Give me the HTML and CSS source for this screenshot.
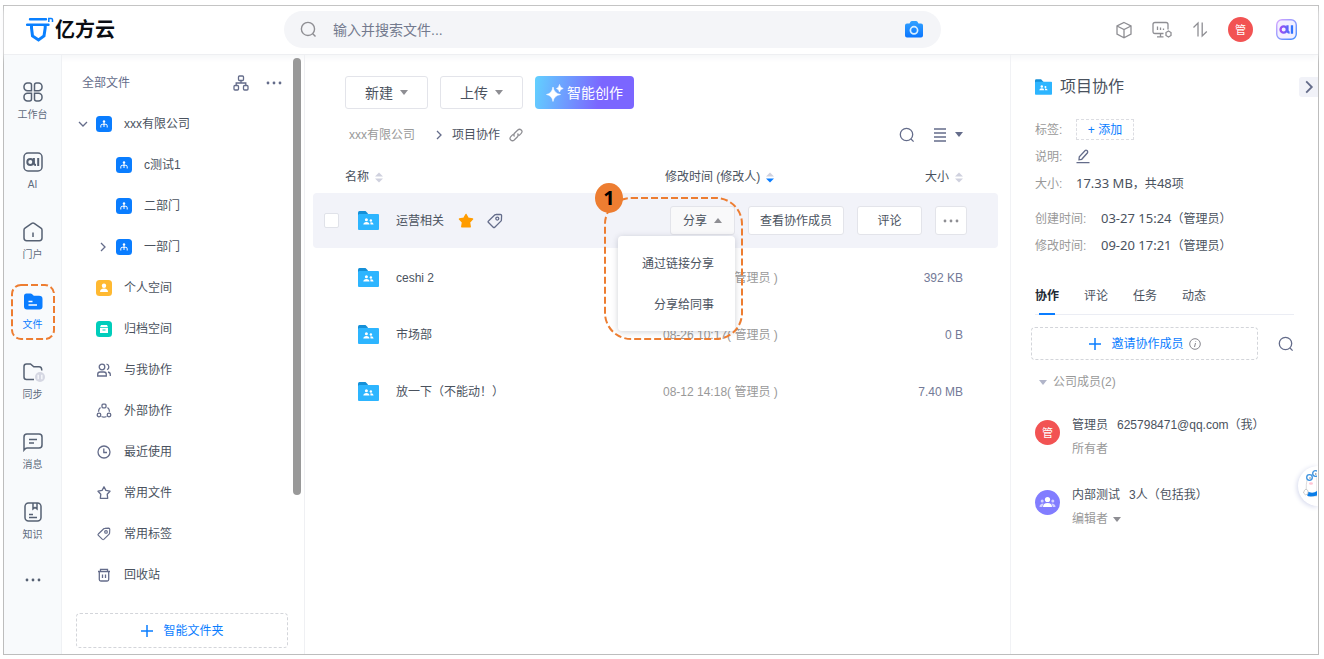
FILE: index.html
```html
<!DOCTYPE html>
<html lang="zh-CN">
<head>
<meta charset="utf-8">
<meta name="viewport" content="width=device-width, initial-scale=1">
<title>亿方云</title>
<link rel="stylesheet" href="styles.css">
</head>
<body>
<svg class="sprite" aria-hidden="true">
  <symbol id="i-search" viewBox="0 0 16 16"><circle cx="7.5" cy="7.5" r="6.2"/><path d="M12 12l2.6 2.6"/></symbol>
  <symbol id="i-dots" viewBox="0 0 16 16"><g fill="currentColor" stroke="none"><circle cx="2" cy="8" r="1.4"/><circle cx="8" cy="8" r="1.4"/><circle cx="14" cy="8" r="1.4"/></g></symbol>
  <symbol id="i-dept" viewBox="0 0 16 16"><rect width="16" height="16" rx="3.5" fill="#0a7dff" stroke="none"/><g stroke="#fff" stroke-width="1" fill="none"><path d="M8 5v6M4.8 11.500V9.800Q4.8 8.300 6.2 8.300H9.800Q11.200 8.300 11.200 9.800V11.500"/></g><circle cx="8" cy="5.400" r="1.200" fill="#fff" stroke="none"/></symbol>
  <symbol id="i-folder" viewBox="0 0 21 19"><g stroke="none"><path d="M0 1.500Q0 0 1.500 0H7.5L10 2.600V8H0Z" fill="#1590d8"/><path d="M0 4L1 3H20Q21 3 21 4V18Q21 19 20 19H1Q0 19 0 18Z" fill="#2db5ff"/><g fill="#fff"><circle cx="8.4" cy="8.800" r="1.500"/><path d="M5.3 13.500Q5.500 11 8.400 11T11.500 13.500Z"/><circle cx="12.900" cy="9.500" r="1.200"/><path d="M12.300 11.400Q15.300 11 15.600 13.500H12.500Z"/></g></g></symbol>
  <symbol id="i-plus" viewBox="0 0 14 14"><path d="M7 1v12M1 7h12"/></symbol>
  <symbol id="i-tag" viewBox="0 0 16 16"><path d="M1.3 9.3Q.8 8.6 1.5 8L7.7 2Q8.2 1.5 9 1.5L13.3 1.3Q14.6 1.3 14.6 2.6L14.4 6.9Q14.4 7.6 13.9 8.1L7.8 14.2Q7 14.9 6.2 14.2Z"/><circle cx="10.3" cy="5.6" r="1.5"/></symbol>
  <symbol id="i-right" viewBox="0 0 10 10"><path d="M3 1l4 4-4 4"/></symbol>
  <symbol id="i-sort" viewBox="0 0 8 11"><path class="up" d="M4 0.5L8 4.5H0Z"/><path class="down" d="M4 10.5L8 6.5H0Z"/></symbol>
  <symbol id="i-ai" viewBox="0 0 20 20"><circle cx="7.300" cy="10" r="3"/><path d="M10.900 6V10.500Q10.900 13 13 13M15.200 6V14"/></symbol>
</svg>

<div class="app">
  <header class="topbar">
    <a class="brand" href="#" aria-label="亿方云">
      <svg class="brand-mark" width="28" height="26" viewBox="0 0 28 26"><g fill="none" stroke="#0a80ff"><path d="M4 2.300H20M1 7.800H22.500" stroke-width="2.400" stroke-linecap="round"/><path d="M5.500 8.500V11L6.500 19L12.500 23L18 19L19.200 11V8.500" stroke-width="3"/></g><path d="M22.800 5V1.500H25.200Q26.500 1.500 26.500 2.800V5" fill="none" stroke="#0a80ff" stroke-width="1.500"/></svg>
      <span class="brand-name">亿方云</span>
    </a>
    <label class="search">
      <svg class="ico grey" width="17" height="17"><use href="#i-search"/></svg>
      <input class="search-input" type="text" aria-label="搜索" placeholder="输入并搜索文件...">
      <svg width="18" height="17" viewBox="0 0 18 17"><defs><linearGradient id="cam" x2="0" y2="1"><stop stop-color="#33a2ff"/><stop offset="1" stop-color="#0a76ff"/></linearGradient></defs><path d="M2 2.6H4.5L5.5 .8Q6 0 7 0H11Q12 0 12.5.8L13.5 2.6H16Q18 2.6 18 4.6V14.5Q18 16.5 16 16.5H2Q0 16.5 0 14.5V4.6Q0 2.6 2 2.6Z" fill="url(#cam)"/><circle cx="9" cy="9.3" r="3.6" fill="none" stroke="#d9efff" stroke-width="1.7"/></svg>
    </label>
    <nav class="tools">
      <button class="bare" aria-label="应用"><svg class="ico grey" width="16" height="18" viewBox="0 0 16 18"><path d="M8 1.5L15 5V13L8 16.7L1 13V5ZM1 5L8 8.6L15 5M8 8.6V16.7"/></svg></button>
      <button class="bare" aria-label="设备"><svg class="ico grey" width="20" height="18" viewBox="0 0 20 18"><path d="M11.5 12.5H3Q1 12.5 1 10.5V3.500Q1 1.500 3 1.500H14Q16 1.500 16 3.500V8.500M5.500 5.500V9M8.500 6.500V9M11.500 7.500V9M8.500 12.500V15.500M5 15.800H11.500"/><path d="M16.500 10L19 11.500V14.500L16.500 16L14 14.500V11.500Z"/></svg></button>
      <button class="bare" aria-label="传输"><svg class="ico grey" width="16" height="18" viewBox="0 0 16 18"><path d="M1.500 6.500L6 2V15.500M10.200 1.500V15L14.800 10.500"/></svg></button>
      <span class="avatar red">管</span>
      <button class="bare ai-btn" aria-label="AI"><svg width="21" height="21" viewBox="0 0 20 20"><defs><linearGradient id="aig" x2="1" y2="1"><stop stop-color="#d9a6ff"/><stop offset="1" stop-color="#3d8bff"/></linearGradient><linearGradient id="ait" gradientUnits="userSpaceOnUse" x1="4" y1="0" x2="16" y2="0"><stop stop-color="#a24df2"/><stop offset="1" stop-color="#2b76ff"/></linearGradient></defs><rect x=".7" y=".7" width="18.600" height="18.600" rx="5" fill="#f3f0ff" stroke="url(#aig)" stroke-width="1.300"/><g fill="none" stroke="url(#ait)" stroke-width="2.200"><use href="#i-ai"/></g></svg></button>
    </nav>
  </header>

  <div class="body">
    <nav class="rail">
      <a class="rail-item" href="#"><svg class="ico" width="20" height="20" viewBox="0 0 20 20"><path d="M8.500 8.700H4.500A3.500 3.500 0 0 1 1 5.200V4.500A3.500 3.500 0 0 1 4.500 1H6.500Q8.500 1 8.500 3ZM11.500 8.700H15.500A3.500 3.500 0 0 0 19 5.200V4.500A3.500 3.500 0 0 0 15.500 1H13.500Q11.500 1 11.500 3ZM8.500 11.300H4.500A3.500 3.500 0 0 0 1 14.800V15.500A3.500 3.500 0 0 0 4.500 19H6.500Q8.500 19 8.500 17ZM11.500 11.300H15.500A3.500 3.500 0 0 1 19 14.800V15.500A3.500 3.500 0 0 1 15.500 19H13.500Q11.500 19 11.500 17Z"/></svg><span>工作台</span></a>
      <a class="rail-item" href="#"><svg class="ico" width="20" height="20" viewBox="0 0 20 20"><rect x="1" y="1" width="18" height="18" rx="4"/><g stroke-width="2"><use href="#i-ai"/></g></svg><span>AI</span></a>
      <a class="rail-item" href="#"><svg class="ico" width="20" height="20" viewBox="0 0 20 20"><path d="M1 8Q1 6.800 2 6.100L8.800 1.300Q10 .6 11.200 1.300L18 6.100Q19 6.800 19 8V16Q19 18.700 16.300 18.700H3.700Q1 18.700 1 16ZM10 10.500V15"/></svg><span>门户</span></a>
      <a class="rail-item active" href="#"><svg width="20" height="20" viewBox="0 0 20 20"><path d="M1 4Q1 1.500 3.500 1.500H7.500Q8.500 1.500 9.200 2.200L10.800 3.700H16Q19.500 3.700 19.500 7V14.500Q19.500 17.500 16.500 17.500H4Q1 17.500 1 14.500Z" fill="#0a7dff"/><path d="M5.500 9.500H9.500M5.500 13H14" stroke="#fff" stroke-width="1.400"/></svg><span>文件</span>
        <svg class="focus-frame"><rect class="dash" x="1" y="1" rx="9" width="42" height="54"/></svg></a>
      <a class="rail-item" href="#"><svg class="ico" width="24" height="20" viewBox="-2 0 24 20"><path d="M11 17.500H3.500Q1 17.500 1 15V4.500Q1 2 3.500 2H7.500L10.800 4.800H16Q18.800 4.800 18.800 8.500"/><circle cx="17" cy="15" r="5" fill="#d5d7e2" stroke="none"/><path d="M15.200 12.800V17.200M18.800 12.800V17.200" stroke="#f5f6fa" stroke-width="1.500"/></svg><span>同步</span></a>
      <a class="rail-item" href="#"><svg class="ico" width="20" height="20" viewBox="0 0 20 20"><path d="M1 18V5Q1 2 4 2H16Q19 2 19 5V13Q19 16 16 16H4Q2.500 16 1 18ZM6 7.500H14M6 11H11"/></svg><span>消息</span></a>
      <a class="rail-item" href="#"><svg class="ico" width="20" height="20" viewBox="0 0 20 20"><rect x="2" y="1" width="16" height="18" rx="3.500"/><path d="M10 1V7L12 5.500L14 7V1M6 12.500H10M6 15.500H14"/></svg><span>知识</span></a>
      <button class="bare rail-more" aria-label="更多"><svg class="ico" width="16" height="16"><use href="#i-dots"/></svg></button>
    </nav>

    <aside class="side">
      <div class="side-main">
        <div class="side-head"><span>全部文件</span>
          <button class="bare" aria-label="组织架构"><svg class="ico" width="16" height="16" viewBox="0 0 16 16"><rect x="5.500" y="1" width="5" height="4.500" rx="1"/><rect x="1" y="10.500" width="4.500" height="4.500" rx="1"/><rect x="10.500" y="10.500" width="4.500" height="4.500" rx="1"/><path d="M8 5.500V8M3.200 10.500V8H12.800V10.500"/></svg></button>
          <button class="bare" aria-label="更多"><svg class="ico" width="16" height="16"><use href="#i-dots"/></svg></button></div>
        <ul class="tree">
          <li><a class="node" href="#"><svg class="ico" width="10" height="10" viewBox="0 0 10 10"><path d="M1 3l4 4 4-4"/></svg><svg width="16" height="16"><use href="#i-dept"/></svg><span>xxx有限公司</span></a></li>
          <li><a class="node sub" href="#"><i></i><svg width="16" height="16"><use href="#i-dept"/></svg><span>c测试1</span></a></li>
          <li><a class="node sub" href="#"><i></i><svg width="16" height="16"><use href="#i-dept"/></svg><span>二部门</span></a></li>
          <li><a class="node sub" href="#"><svg class="ico" width="10" height="10"><use href="#i-right"/></svg><svg width="16" height="16"><use href="#i-dept"/></svg><span>一部门</span></a></li>
          <li><a class="node" href="#"><i></i><svg width="16" height="16" viewBox="0 0 16 16"><rect width="16" height="16" rx="3.500" fill="#ffb931"/><g fill="#fff"><circle cx="8" cy="5.800" r="2.200"/><path d="M4 12Q4 8.500 8 8.500T12 12Z"/></g></svg><span>个人空间</span></a></li>
          <li><a class="node" href="#"><i></i><svg width="16" height="16" viewBox="0 0 16 16"><rect width="16" height="16" rx="3.500" fill="#00cdbb"/><path d="M5 4H11L12 6.200H4ZM4 7H12V12H4Z" fill="#fff"/><path d="M6.500 9H9.500" stroke="#00cdbb"/></svg><span>归档空间</span></a></li>
          <li><a class="node" href="#"><i></i><svg class="ico" width="16" height="16" viewBox="0 0 16 16"><circle cx="6" cy="5" r="2.800"/><path d="M1.700 14V12.500Q1.700 10 4 10H8Q10.300 10 10.300 12.500V14ZM10.500 2.200A2.800 2.800 0 0 1 11 7.600M12 10Q14.300 10.500 14.300 12.500V14"/></svg><span>与我协作</span></a></li>
          <li><a class="node" href="#"><i></i><svg class="ico" width="16" height="16" viewBox="0 0 16 16"><rect x="6" y="1.200" width="4" height="3.600" rx="1"/><circle cx="3" cy="12" r="1.800"/><circle cx="13" cy="12" r="1.800"/><path d="M4.500 4.500Q2.500 6 2.500 8.800M11.500 4.500Q13.500 6 13.500 8.800M5.500 13.500Q8 14.800 10.500 13.500"/></svg><span>外部协作</span></a></li>
          <li><a class="node" href="#"><i></i><svg class="ico" width="16" height="16" viewBox="0 0 16 16"><circle cx="8" cy="8" r="6"/><path d="M7.800 4.500V8.500H11"/></svg><span>最近使用</span></a></li>
          <li><a class="node" href="#"><i></i><svg class="ico" width="16" height="16" viewBox="0 0 16 16"><path d="M8 1.800L9.900 5.400L14 6.200L11.200 9.200L11.700 13.300H4.300L4.800 9.200L2 6.200L6.100 5.400Z" stroke-linejoin="round"/></svg><span>常用文件</span></a></li>
          <li><a class="node" href="#"><i></i><svg class="ico" width="14" height="14"><use href="#i-tag"/></svg><span>常用标签</span></a></li>
          <li><a class="node" href="#"><i></i><svg class="ico" width="16" height="16" viewBox="0 0 16 16"><path d="M2 4.500H14M3.300 4.500V12.500Q3.300 14 4.800 14H11.200Q12.700 14 12.700 12.500V4.500M4.500 4.500V2.300H11.500V4.500M6.500 7.500V11M9.500 7.500V11"/></svg><span>回收站</span></a></li>
        </ul>
        <button class="dashed-btn smart"><svg class="ico" width="14" height="14"><use href="#i-plus"/></svg>智能文件夹</button>
      </div>
      <div class="scrollbar"></div>
    </aside>

    <main class="main">
      <div class="actions">
        <button class="btn big">新建<i class="caret"></i></button>
        <button class="btn big">上传<i class="caret"></i></button>
        <button class="ai-create"><svg width="18" height="18" viewBox="0 0 18 18" fill="#fff"><path d="M7 3Q8 9.500 14.500 10.500Q8 11.500 7 17.500Q6 11.500 .5 10.500Q6 9.500 7 3ZM13.500 .5Q14 4 17.200 4.500Q14 5 13.500 8Q13 5 10.500 4.500Q13 4 13.500 .5Z" stroke="#fff" stroke-width=".6"/></svg>智能创作</button>
      </div>
      <div class="crumbs">
        <a class="crumb-root" href="#">xxx有限公司</a>
        <svg class="ico crumb-sep" width="10" height="10"><use href="#i-right"/></svg>
        <span>项目协作</span>
        <button class="bare" aria-label="复制链接"><svg class="ico grey" width="16" height="16" viewBox="0 0 16 16"><path d="M6.500 9.500Q5 8 6.500 6.300L9.800 3Q11.500 1.500 13.200 3T13.200 6.400L11 8.600M9.500 6.500Q11 8 9.500 9.700L6.200 13Q4.500 14.500 2.800 13T2.800 9.600L5 7.400"/></svg></button>
        <button class="bare push" aria-label="搜索"><svg class="ico" width="16" height="16"><use href="#i-search"/></svg></button>
        <button class="bare view" aria-label="视图"><svg class="ico" width="14" height="16" viewBox="0 0 14 16"><path d="M1 2H13M1 6H13M1 10H13M1 14H13"/></svg><i class="caret dark"></i></button>
      </div>
      <table class="files">
        <colgroup><col><col class="c-date"><col class="c-size"></colgroup>
        <thead><tr>
          <th class="h-name">名称<svg class="sort" width="8" height="11"><use href="#i-sort"/></svg></th>
          <th class="h-date">修改时间 (修改人)<svg class="sort desc" width="8" height="11"><use href="#i-sort"/></svg></th>
          <th class="h-size">大小<svg class="sort" width="8" height="11"><use href="#i-sort"/></svg></th>
        </tr></thead>
        <tbody>
          <tr class="selected">
            <td><div class="file"><input class="check" type="checkbox" aria-label="选择 运营相关"><svg width="21" height="19"><use href="#i-folder"/></svg><span>运营相关</span><svg class="star" width="16" height="16" viewBox="0 0 16 16"><path d="M8 1.500L10 5.200L14.500 6L11.500 9.300L12.200 13.800H3.800L4.500 9.300L1.500 6L6 5.200Z" fill="#ff9c00" stroke="#ff9c00" stroke-width="1.500" stroke-linejoin="round"/></svg><svg class="ico" width="16" height="16"><use href="#i-tag"/></svg></div></td>
            <td colspan="2"><div class="row-actions">
              <div class="share">
                <button class="btn share-btn" aria-expanded="true">分享<i class="caret flip"></i></button>
                <div class="menu"><button class="menu-item">通过链接分享</button><button class="menu-item">分享给同事</button></div>
                <div class="callout"><svg><rect class="dash" x="1" y="1" width="137" height="141" rx="26"/></svg><b>1</b></div>
              </div>
              <button class="btn members">查看协作成员</button>
              <button class="btn comment">评论</button>
              <button class="btn more" aria-label="更多"><svg class="ico" width="16" height="16"><use href="#i-dots"/></svg></button>
            </div></td>
          </tr>
          <tr><td><div class="file pad"><svg width="21" height="19"><use href="#i-folder"/></svg><span>ceshi 2</span></div></td><td class="date">09-20 17:21( 管理员 )</td><td class="size">392 KB</td></tr>
          <tr><td><div class="file pad"><svg width="21" height="19"><use href="#i-folder"/></svg><span>市场部</span></div></td><td class="date">08-26 10:17( 管理员 )</td><td class="size">0 B</td></tr>
          <tr><td><div class="file pad"><svg width="21" height="19"><use href="#i-folder"/></svg><span>放一下（不能动！）</span></div></td><td class="date">08-12 14:18( 管理员 )</td><td class="size">7.40 MB</td></tr>
        </tbody>
      </table>
    </main>

    <aside class="info">
      <div class="info-head"><svg width="17" height="16"><use href="#i-folder"/></svg><h1>项目协作</h1><button class="bare collapse" aria-label="收起"><svg class="ico" width="14" height="14" viewBox="0 0 10 10"><use href="#i-right"/></svg></button></div>
      <dl class="meta">
        <div class="meta-row"><dt>标签:</dt><dd><button class="add">+ 添加</button></dd></div>
        <div class="meta-row"><dt>说明:</dt><dd><button class="bare" aria-label="编辑说明"><svg class="ico" width="14" height="15" viewBox="0 0 14 15"><path d="M.5 13.700H13.500M3 10.800L3.300 7.800L9.200 1.500Q10 .8 11 1.600T11.500 3.800L5.700 10.300Z"/></svg></button></dd></div>
        <div class="meta-row"><dt>大小:</dt><dd><span class="num">17.33 MB</span>，共<span class="num">48</span>项</dd></div>
        <div class="meta-row wide gap"><dt>创建时间:</dt><dd><span class="num">03-27 15:24</span>（管理员）</dd></div>
        <div class="meta-row wide"><dt>修改时间:</dt><dd><span class="num">09-20 17:21</span>（管理员）</dd></div>
      </dl>
      <div class="tabs"><button class="tab on">协作</button><button class="tab">评论</button><button class="tab">任务</button><button class="tab">动态</button></div>
      <div class="invite-row"><button class="dashed-btn invite"><svg class="ico" width="14" height="14"><use href="#i-plus"/></svg><span>邀请协作成员</span><svg class="ico grey hint" width="12" height="12" viewBox="0 0 12 12"><circle cx="6" cy="6" r="5.300"/><path d="M6.500 5L5.500 9M6.800 3L6.700 3.600"/></svg></button><button class="bare" aria-label="搜索成员"><svg class="ico" width="16" height="16"><use href="#i-search"/></svg></button></div>
      <div class="group"><i class="caret pale"></i>公司成员(2)</div>
      <div class="member"><span class="avatar red">管</span><div><p class="who">管理员<span>625798471@qq.com（我）</span></p><p class="role">所有者</p></div></div>
      <div class="member"><span class="avatar violet"><svg width="17" height="13" viewBox="0 0 17 13" fill="#fff"><circle cx="8.500" cy="3.500" r="2.600"/><path d="M4 11Q4 7 8.500 7T13 11Z"/><g opacity=".65"><circle cx="3.200" cy="5" r="1.500"/><circle cx="13.800" cy="5" r="1.500"/><path d="M.5 11Q.5 7.500 4.500 7.500L3.200 11ZM16.500 11Q16.500 7.500 12.500 7.500L13.800 11Z"/></g></svg></span><div><p class="who">内部测试<span>3人（包括我）</span></p><p class="role">编辑者<i class="caret"></i></p></div></div>
      <div class="helper"><svg width="19" height="40" viewBox="0 0 19 40"><path d="M9 14Q12 8 19 7V30H10Q7 24 9 14Z" fill="#fff" stroke="#c4c4c8" stroke-width=".6"/><path d="M9 25.500Q15 28 19 25V29.500Q13 31 9.500 30Z" fill="#0a7de8"/><circle cx="11.500" cy="11.500" r="2.800" fill="#fff" stroke="#3b92e0" stroke-width="1.300"/><circle cx="17.500" cy="7.500" r="2.800" fill="#fff" stroke="#3b92e0" stroke-width="1.300"/><circle cx="12" cy="12" r=".7" fill="#666"/><circle cx="17.800" cy="8" r=".7" fill="#666"/><ellipse cx="13" cy="17.500" rx="2" ry="1.200" fill="#ffc4d4"/><path d="M8 23Q11 24 10 28Q7 30 5.500 27Q6 24 8 23Z" fill="#fff" stroke="#aaa" stroke-width=".6"/></svg></div>
    </aside>
  </div>
</div>
</body>
</html>
```

FILE: styles.css
```css
* { box-sizing: border-box; }

body {
  margin: 0;
  min-height: 100vh;
  display: flex;
  padding: 5px 5px 4px 3px;
  background: #fff;
  color: #4a525e;
  font: 12px/18px "Liberation Sans", "Noto Sans CJK SC", sans-serif;
}

button, input { font: inherit; color: inherit; }
button { cursor: pointer; white-space: nowrap; }
a { color: inherit; text-decoration: none; }
svg { flex: none; display: block; }
p, h1, dl, dd, ul { margin: 0; padding: 0; }
ul { list-style: none; }

.sprite { position: absolute; width: 0; height: 0; }
.ico { fill: none; stroke: currentColor; stroke-width: 1.3; color: #646c8a; }
.ico.grey { color: #8e8e93; }
.bare { display: flex; align-items: center; padding: 0; border: 0; background: none; }
.dash { fill: none; stroke: #ed7d31; stroke-width: 2; stroke-dasharray: 7 3; }

.caret {
  border: 4px solid transparent;
  border-top: 5px solid #8e8e93;
  border-bottom: 0;
}
.caret.dark { border-top-color: #646c8a; }
.caret.pale { border-top-color: #b1b5c9; }
.caret.flip { border-top: 0; border-bottom: 5px solid #8e8e93; }

.app { flex: 1; min-width: 0; display: flex; flex-direction: column; border: 1px solid #bdbdbd; }

/* Top bar */
.topbar {
  display: flex;
  align-items: center;
  height: 49px;
  padding: 0 21px 1px 0;
  border-bottom: 1px solid #eeeff2;
  box-shadow: 0 3px 6px #f5f6f8;
}
.brand { display: flex; align-items: center; gap: 1px; width: 280px; padding-left: 22px; }
.brand-name { color: #0b0d12; font-size: 20px; line-height: 26px; font-weight: 700; }
.search {
  flex: 1;
  display: flex;
  align-items: center;
  gap: 16px;
  height: 37px;
  padding: 0 18px 0 16px;
  border-radius: 19px;
  background: #f4f5f8;
}
.search-input { flex: 1; min-width: 0; padding: 0; border: 0; outline: 0; background: none; font-size: 14px; }
.search-input::placeholder { color: #737a8e; opacity: 1; }
.tools { display: flex; align-items: center; gap: 20px; margin-left: 175px; }
.ai-btn { margin-left: 3px; }
.avatar {
  display: flex;
  flex: none;
  align-items: center;
  justify-content: center;
  width: 25px;
  height: 25px;
  border-radius: 50%;
  color: #fff;
  font-size: 11px;
}
.red { background: #f25353; }
.violet { background: #827dff; }

.body { flex: 1; display: flex; }

/* Icon rail */
.rail {
  width: 58px;
  padding-top: 12px;
  border-right: 1px solid #eff1f4;
  background: #f8fafc;
  color: #5f6b7c;
  font-size: 10px;
  line-height: 16px;
}
.rail-item {
  position: relative;
  display: flex;
  flex-direction: column;
  align-items: center;
  gap: 5px;
  height: 70px;
  padding-top: 15px;
}
.rail .ico { color: #566173; stroke-width: 1.5; }
.active { color: #0a7dff; }
.focus-frame { position: absolute; top: 7px; left: 7px; width: 44px; height: 56px; }
.rail-more { margin: 15px auto; }

/* Folder sidebar */
.side { display: flex; width: 243px; border-right: 1px solid #eff0f3; }
.side-main { flex: 1; padding: 7px 5px 5px 14px; }
.side-head { display: flex; align-items: center; gap: 17px; height: 41px; padding: 0 6px; color: #646c8a; }
.side-head span { margin-right: auto; }
.node { display: flex; align-items: center; height: 41px; padding-left: 2px; }
.node > :first-child { width: 10px; margin-right: 8px; }
.node > :nth-child(2) { width: 16px; margin-right: 12px; }
.node.sub { padding-left: 22px; }
.dashed-btn {
  display: flex;
  align-items: center;
  justify-content: center;
  border: 1px dashed #d3d5da;
  border-radius: 4px;
  background: none;
  color: #0a7dff;
}
.dashed-btn .ico { color: #0a7dff; stroke-width: 1.5; }
.dashed-btn .ico.hint { color: #85858d; stroke-width: 1; }
.smart { gap: 9px; width: 100%; height: 35px; margin-top: 18px; padding: 0; }
.scrollbar { width: 8px; height: 437px; margin: 3px 3px 0 0; border-radius: 4px; background: #999; }

/* File list */
.main { flex: 1; min-width: 0; padding: 21px 12px 0 8px; }
.actions { display: flex; gap: 12px; padding-left: 32px; }
.btn {
  display: flex;
  align-items: center;
  justify-content: center;
  gap: 7px;
  height: 29px;
  padding: 0;
  border: 1px solid #e3e4ea;
  border-radius: 3px;
  background: #fff;
}
.big { width: 83px; height: 33px; font-size: 14px; }
.ai-create {
  display: flex;
  align-items: center;
  justify-content: center;
  gap: 3px;
  width: 99px;
  height: 33px;
  padding: 0;
  border: 0;
  border-radius: 4px;
  background: linear-gradient(100deg, #62d1ff, #7b66ff 65%);
  color: #fff;
  font-size: 14px;
}
.crumbs { display: flex; align-items: center; height: 51px; padding: 0 35px 0 36px; }
.crumb-root { color: #999; }
.crumb-sep { margin: 0 8px 0 19px; }
.crumbs .bare { margin-left: 8px; }
.crumbs .push { margin-left: auto; }
.crumbs .view { gap: 8px; margin-left: 18px; }

.files { width: 100%; table-layout: fixed; border-collapse: separate; border-spacing: 0 2px; }
.c-date { width: 200px; }
.c-size { width: 135px; }
.files th, .files td { padding: 0; font-weight: 400; text-align: left; }
.files th { height: 29px; }
.files td { height: 55px; }
.files .h-name { padding-left: 32px; }
.files .h-date { padding-left: 2px; }
.files .h-size, .files .size { padding-right: 35px; text-align: right; }
.sort { display: inline-block; margin-left: 6px; vertical-align: -2px; fill: #cfd1de; --down: #cfd1de; }
.sort.desc { --down: #0a7dff; }
.down { fill: var(--down); }
.selected td { background: #f2f3f9; }
.selected td:first-child { border-radius: 4px 0 0 4px; }
.selected td:last-child { border-radius: 0 4px 4px 0; }
.file { display: flex; align-items: center; padding-left: 11px; }
.file.pad { padding-left: 45px; }
.file > span { margin-left: 17px; }
.check { appearance: none; width: 15px; height: 15px; margin: 0 19px 0 0; border: 1px solid #e0e2e9; border-radius: 2px; background: #fff; }
.star { margin: 0 13px 0 14px; }
.date { color: #999; }
.size { color: #737a97; }
.row-actions { display: flex; justify-content: flex-end; gap: 13px; padding-right: 31px; }
.share { position: relative; width: 65px; }
.share-btn { width: 100%; background: #f9f9fa; }
.members { width: 96px; }
.comment { width: 65px; }
.more { width: 32px; }
.more .ico { color: #8e8e93; }
.menu {
  position: absolute;
  top: 30px;
  right: 0;
  z-index: 1;
  width: 117px;
  padding: 7px 0 6px;
  border-radius: 4px;
  background: #fff;
  box-shadow: 0 1px 6px rgba(40, 45, 70, .22);
}
.menu-item { display: block; width: 100%; height: 41px; padding: 0 21px; border: 0; background: none; text-align: right; }
.callout { position: absolute; top: -9px; left: -66px; z-index: 2; width: 139px; height: 143px; pointer-events: none; }
.callout svg { width: 100%; height: 100%; }
.callout b {
  position: absolute;
  top: -14px;
  left: -9px;
  width: 28px;
  height: 30px;
  border-radius: 50%;
  background: #ed7d31;
  color: #000;
  font: 700 20px/30px "Noto Sans", sans-serif;
  text-align: center;
}

/* Details panel */
.info { position: relative; width: 308px; padding: 16px 24px 0 24px; border-left: 1px solid #f1f2f5; }
.info-head { display: flex; align-items: center; gap: 8px; height: 32px; margin-right: -24px; }
.info-head h1 { font-size: 16px; line-height: 24px; font-weight: 400; }
.collapse { width: 19px; height: 20px; margin-left: auto; justify-content: center; border-radius: 3px 0 0 3px; background: #f1f2f8; }
.meta { padding-top: 13px; }
.meta-row { display: flex; align-items: center; height: 27px; }
.meta-row.gap { margin-top: 8px; }
.meta-row dt { width: 41px; color: #999; }
.meta-row.wide dt { width: 66px; }
.num { font-family: "Noto Sans", sans-serif; font-size: 13px; }
.add { height: 21px; width: 58px; padding: 0; border: 1px dashed #dcdde2; background: none; color: #0a7dff; }
.tabs { display: flex; gap: 25px; margin-top: 19px; border-bottom: 1px solid #ebedf4; }
.tab { position: relative; height: 36px; padding: 0; border: 0; background: none; }
.tab.on { color: #222a35; font-weight: 700; }
.tab.on::after { content: ""; position: absolute; left: 4px; right: 4px; bottom: -1px; height: 2px; background: #0a7dff; }
.invite-row { display: flex; align-items: center; gap: 20px; margin: 12px 0 0 -4px; }
.invite { flex: 1; height: 33px; }
.invite span { margin: 0 5px 0 9px; }
.group { display: flex; align-items: center; gap: 6px; height: 26px; margin: 9px 0 21px; padding-left: 4px; color: #999; }
.member { display: flex; gap: 12px; height: 70px; }
.member .avatar { margin-top: 4px; }
.who { line-height: 18px; }
.who span { margin-left: 9px; }
.role { display: flex; align-items: center; gap: 5px; margin-top: 6px; color: #999; }
.helper {
  position: absolute;
  top: 411px;
  right: 0;
  width: 20px;
  height: 40px;
  border-radius: 20px 0 0 20px;
  background: #fff;
  box-shadow: -1px 1px 5px #d4d8ec;
  clip-path: inset(-8px 0 -8px -8px);
}
```
